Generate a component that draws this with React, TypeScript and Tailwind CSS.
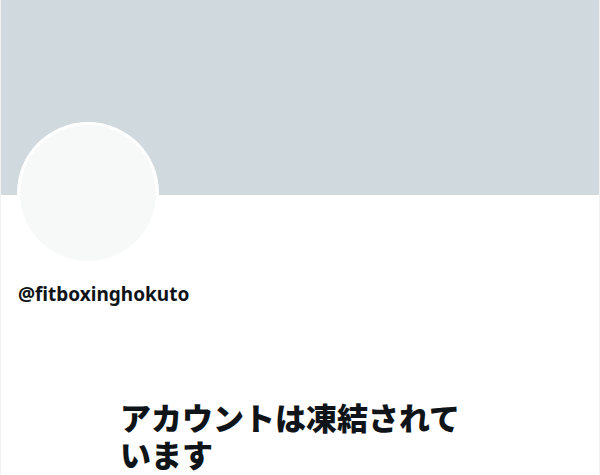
export default function App() {
  return (
    <div className="w-[600px] h-[475px] overflow-hidden bg-white" style={{ fontFamily: '"Segoe UI", "Noto Sans", "Noto Sans CJK JP", sans-serif' }}>
      <div className="w-[600px] h-[475px] border-x border-[#eff3f4] flex flex-col">
        <div className="h-[195px] bg-[#cfd9de] shrink-0" />
        <div className="px-4 relative">
          <div className="-mt-[73px] ml-[0px] w-[142px] h-[142px] rounded-full bg-white p-[3px]">
            <div className="w-full h-full rounded-full bg-[#f7f9f9]" />
          </div>
          <div className="mt-[18px] ml-[1px] text-[19px] leading-[24px] font-bold text-[#0f1419]">@fitboxinghokuto</div>
        </div>
        <div className="mt-[94px] ml-[119px] w-[360px] text-[31px] leading-[37px] font-extrabold text-[#0f1419]">
          アカウントは凍結されています
        </div>
      </div>
    </div>
  );
}
